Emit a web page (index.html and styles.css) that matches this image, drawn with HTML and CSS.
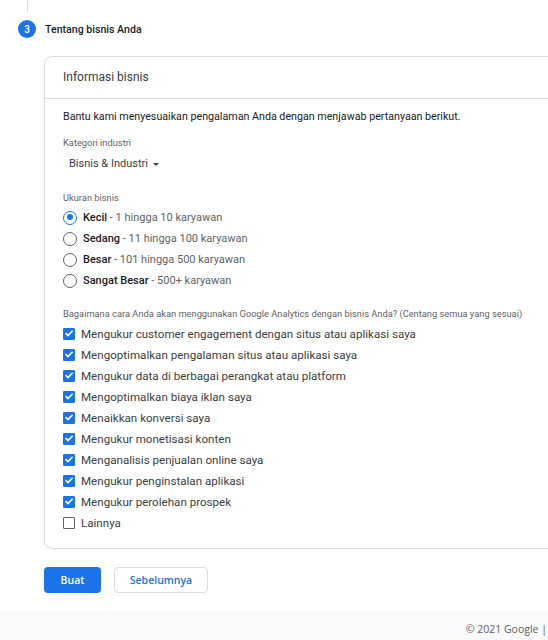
FILE: index.html
```html
<!DOCTYPE html>
<html lang="id">
<head>
<meta charset="utf-8">
<title>Tentang bisnis Anda</title>
<link rel="stylesheet" href="styles.css">
</head>
<body>
<div class="page">
  <div class="rail"></div>
  <div class="step-head">
    <span class="step-num">3</span>
    <span class="step-title">Tentang bisnis Anda</span>
  </div>
  <section class="card">
    <div class="card-head">Informasi bisnis</div>
    <div class="card-body">
      <p class="intro">Bantu kami menyesuaikan pengalaman Anda dengan menjawab pertanyaan berikut.</p>
      <div class="label label-cat">Kategori industri</div>
      <div class="dropdown">Bisnis &amp; Industri <span class="caret"></span></div>
      <div class="label label-size">Ukuran bisnis</div>
      <div class="radios">
        <div class="radio-row"><span class="radio checked"></span><span class="opt"><b>Kecil</b> - 1 hingga 10 karyawan</span></div>
        <div class="radio-row"><span class="radio"></span><span class="opt"><b>Sedang</b> - 11 hingga 100 karyawan</span></div>
        <div class="radio-row"><span class="radio"></span><span class="opt"><b>Besar</b> - 101 hingga 500 karyawan</span></div>
        <div class="radio-row"><span class="radio"></span><span class="opt"><b>Sangat Besar</b> - 500+ karyawan</span></div>
      </div>
      <div class="label label-q">Bagaimana cara Anda akan menggunakan Google Analytics dengan bisnis Anda? (Centang semua yang sesuai)</div>
      <div class="checks">
        <div class="check-row"><span class="box on"><svg viewBox="0 0 12 12"><path d="M2.6 6.2 L5 8.5 L9.6 3.8" /></svg></span><span>Mengukur customer engagement dengan situs atau aplikasi saya</span></div>
        <div class="check-row"><span class="box on"><svg viewBox="0 0 12 12"><path d="M2.6 6.2 L5 8.5 L9.6 3.8" /></svg></span><span>Mengoptimalkan pengalaman situs atau aplikasi saya</span></div>
        <div class="check-row"><span class="box on"><svg viewBox="0 0 12 12"><path d="M2.6 6.2 L5 8.5 L9.6 3.8" /></svg></span><span>Mengukur data di berbagai perangkat atau platform</span></div>
        <div class="check-row"><span class="box on"><svg viewBox="0 0 12 12"><path d="M2.6 6.2 L5 8.5 L9.6 3.8" /></svg></span><span>Mengoptimalkan biaya iklan saya</span></div>
        <div class="check-row"><span class="box on"><svg viewBox="0 0 12 12"><path d="M2.6 6.2 L5 8.5 L9.6 3.8" /></svg></span><span>Menaikkan konversi saya</span></div>
        <div class="check-row"><span class="box on"><svg viewBox="0 0 12 12"><path d="M2.6 6.2 L5 8.5 L9.6 3.8" /></svg></span><span>Mengukur monetisasi konten</span></div>
        <div class="check-row"><span class="box on"><svg viewBox="0 0 12 12"><path d="M2.6 6.2 L5 8.5 L9.6 3.8" /></svg></span><span>Menganalisis penjualan online saya</span></div>
        <div class="check-row"><span class="box on"><svg viewBox="0 0 12 12"><path d="M2.6 6.2 L5 8.5 L9.6 3.8" /></svg></span><span>Mengukur penginstalan aplikasi</span></div>
        <div class="check-row"><span class="box on"><svg viewBox="0 0 12 12"><path d="M2.6 6.2 L5 8.5 L9.6 3.8" /></svg></span><span>Mengukur perolehan prospek</span></div>
        <div class="check-row"><span class="box"></span><span>Lainnya</span></div>
      </div>
    </div>
  </section>
  <div class="actions">
    <button class="btn btn-primary">Buat</button>
    <button class="btn btn-secondary">Sebelumnya</button>
  </div>
</div>
<footer class="footer"><span>© 2021 Google |</span></footer>
</body>
</html>
```
FILE: styles.css
```css
html, body {
  margin: 0;
  padding: 0;
}
body {
  width: 548px;
  height: 640px;
  overflow: hidden;
  background: #fff;
  font-family: Roboto, "Liberation Sans", Arial, sans-serif;
  color: #202124;
}
.page {
  display: flex;
  flex-direction: column;
}
.rail {
  width: 0;
  height: 12px;
  margin-left: 27px;
  border-left: 1px solid #dadce0;
}
.step-head {
  display: flex;
  align-items: center;
  margin-top: 8px;
  padding-left: 18px;
  height: 18px;
}
.step-num {
  width: 18px;
  height: 18px;
  border-radius: 50%;
  background: #1a73e8;
  color: #fff;
  font-size: 10px;
  font-weight: 500;
  display: flex;
  align-items: center;
  justify-content: center;
}
.step-title {
  margin-left: 9px;
  font-size: 10.6px;
  font-weight: 500;
  color: #202124;
}
.card {
  margin-top: 18px;
  margin-left: 44px;
  width: 620px;
  border: 1px solid #dadce0;
  border-radius: 8px;
  box-sizing: border-box;
}
.card-head {
  height: 41px;
  line-height: 41px;
  padding-left: 18px;
  font-size: 12px;
  color: #3c4043;
  border-bottom: 1px solid #dadce0;
}
.card-body {
  padding: 0 18px 15px 18px;
  display: flex;
  flex-direction: column;
}
.intro {
  margin: 10px 0 0 0;
  font-size: 10.7px;
  line-height: 16px;
  color: #202124;
}
.label {
  font-size: 9.3px;
  line-height: 14px;
  color: #5f6368;
}
.label-cat { margin-top: 11px; }
.label-size { margin-top: 19px; }
.label-q { margin-top: 16px; }
.dropdown {
  margin-top: 6px;
  margin-left: 6px;
  font-size: 11px;
  line-height: 16px;
  color: #3c4043;
  display: flex;
  align-items: center;
  gap: 3px;
}
.caret {
  width: 0;
  height: 0;
  border-left: 3px solid transparent;
  border-right: 3px solid transparent;
  border-top: 3px solid #3c4043;
  margin-left: 2px;
}
.radios {
  margin-top: 2px;
  display: flex;
  flex-direction: column;
}
.radio-row {
  height: 21px;
  display: flex;
  align-items: center;
  font-size: 11px;
}
.radio {
  width: 14px;
  height: 14px;
  box-sizing: border-box;
  border: 1.5px solid #5f6368;
  border-radius: 50%;
  margin-right: 6px;
  position: relative;
  flex: none;
}
.radio.checked {
  border-color: #1a73e8;
}
.radio.checked::after {
  content: "";
  position: absolute;
  left: 2.5px;
  top: 2.5px;
  width: 6px;
  height: 6px;
  border-radius: 50%;
  background: #1a73e8;
}
.opt {
  color: #5f6368;
}
.opt b {
  color: #202124;
  font-weight: 500;
}
.checks {
  margin-top: 2px;
  display: flex;
  flex-direction: column;
}
.check-row {
  height: 21px;
  display: flex;
  align-items: center;
  font-size: 11.6px;
  color: #3c4043;
}
.box {
  width: 12px;
  height: 12px;
  box-sizing: border-box;
  border: 1.5px solid #5f6368;
  border-radius: 1px;
  margin-right: 6px;
  flex: none;
  display: flex;
}
.box.on {
  background: #1a73e8;
  border-color: #1a73e8;
}
.box svg {
  margin: -1.5px;
  width: 12px;
  height: 12px;
  flex: none;
}
.box svg path {
  fill: none;
  stroke: #fff;
  stroke-width: 1.6;
}
.actions {
  margin-top: 18px;
  margin-left: 44px;
  display: flex;
  gap: 13px;
}
.btn {
  height: 26px;
  border-radius: 4px;
  font-family: "Open Sans", Roboto, sans-serif;
  font-size: 10.5px;
  font-weight: 600;
  padding: 0;
  cursor: pointer;
}
.btn-primary {
  width: 57px;
  background: #1a73e8;
  border: none;
  color: #fff;
}
.btn-secondary {
  width: 94px;
  background: #fff;
  border: 1px solid #dadce0;
  color: #1a73e8;
}
.footer {
  margin-top: 18px;
  height: 40px;
  background: #f8f9fa;
  display: flex;
  justify-content: flex-end;
  padding-top: 11px;
  box-sizing: border-box;
  font-family: "Open Sans", Roboto, sans-serif;
  font-size: 10.5px;
  color: #5f6368;
}
.footer span {
  margin-right: 1px;
}
```
